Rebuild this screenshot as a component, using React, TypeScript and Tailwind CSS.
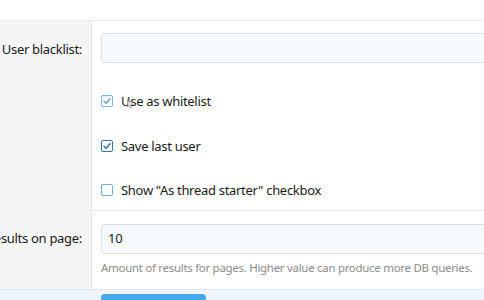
import React from "react";

function Check({ variant }: { variant: "light" | "dark" | "empty" }) {
  const border = variant === "light" ? "#7bb8e3" : variant === "dark" ? "#2f78b5" : "#6aaee0";
  const tick = variant === "light" ? "#5aa3d8" : "#2a6aa3";
  return (
    <span
      className="inline-flex w-[12px] h-[12px] shrink-0 items-center justify-center rounded-[2px] border-[1.5px] bg-white"
      style={{ borderColor: border }}
    >
      {variant !== "empty" && (
        <svg width="8" height="8" viewBox="0 0 8 8" fill="none">
          <path d="M1 4.2 L3.1 6.2 L7 1.8" stroke={tick} strokeWidth="1.4" strokeLinecap="round" strokeLinejoin="round" />
        </svg>
      )}
    </span>
  );
}

export default function App() {
  return (
    <div
      className="relative w-[484px] h-[300px] overflow-hidden bg-white text-[#1a1a1a] tracking-[-0.3px]"
      style={{ fontFamily: '"Noto Sans", "Open Sans", sans-serif' }}
    >
      <div className="w-[560px]">
        <div className="h-[21px] border-b border-[#ececec] bg-white" />
        <div className="flex">
          <div className="w-[92px] shrink-0 bg-[#f5f5f5] border-r border-[#e6e6e6] pr-[9px] text-right text-[13px]">
            <div className="h-[189px] pt-[16px] leading-[24px] whitespace-nowrap flex justify-end">
              <span>User blacklist:</span>
            </div>
            <div className="h-[79px] pt-[16px] leading-[24px] whitespace-nowrap flex justify-end">
              <span>Results on page:</span>
            </div>
          </div>
          <div className="flex-1">
            <div className="h-[190px] border-b border-[#e6e6e6] pl-[9px] pt-[12px]">
              <div className="h-[30px] w-[440px] rounded-[4px] border border-[#dedede] bg-[#f7fafd]" />
              <div className="mt-[28px] flex flex-col gap-[24.5px] text-[13px] leading-[20px]">
                <label className="flex items-center gap-[8px]">
                  <Check variant="light" />
                  <span>Use as whitelist</span>
                </label>
                <label className="flex items-center gap-[8px]">
                  <Check variant="dark" />
                  <span>Save last user</span>
                </label>
                <label className="flex items-center gap-[8px]">
                  <Check variant="empty" />
                  <span>Show "As thread starter" checkbox</span>
                </label>
              </div>
            </div>
            <div className="h-[78px] pl-[9px] pt-[13px]">
              <div className="flex h-[30px] w-[440px] items-center rounded-[4px] border border-[#dedede] bg-[#f7fafd] pl-[6px] text-[13px]">
                10
              </div>
              <div className="mt-[5px] text-[11.5px] leading-[18px] text-[#8c8c8c] whitespace-nowrap">
                Amount of results for pages. Higher value can produce more DB queries.
              </div>
            </div>
          </div>
        </div>
        <div className="h-[20px] border-t border-[#dde6ef] bg-[#eef5fc] pl-[101px] pt-[4px]">
          <div className="h-[20px] w-[105px] rounded-t-[4px] bg-[#47a7eb]" />
        </div>
      </div>
      <svg className="absolute left-[127px] top-[99px]" width="7" height="10" viewBox="0 0 7 10">
        <path d="M0.5 0.5 L0.5 8 L2.3 6.3 L3.6 9.2 L4.6 8.8 L3.4 6 L6 6 Z" fill="#fff" stroke="#555" strokeWidth="0.7" opacity="0.7" />
      </svg>
    </div>
  );
}
